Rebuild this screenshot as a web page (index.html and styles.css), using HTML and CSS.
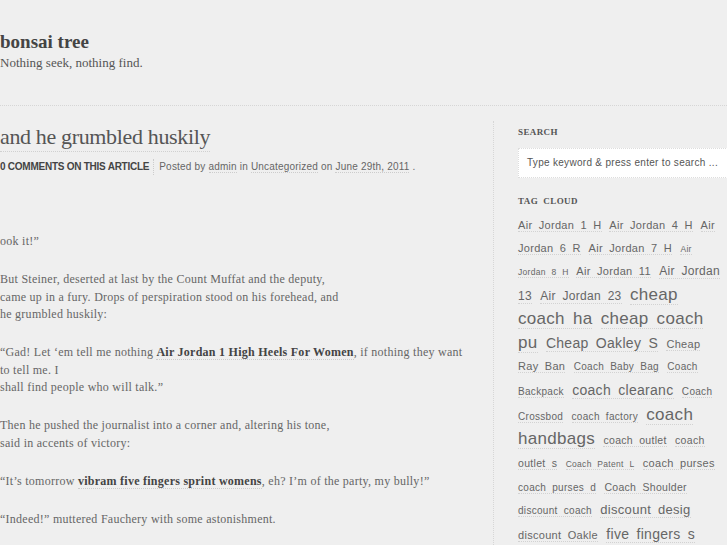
FILE: index.html
```html
<!DOCTYPE html>
<html>
<head>
<meta charset="utf-8">
<title>bonsai tree</title>
<link rel="stylesheet" href="styles.css">
</head>
<body>
<header class="site-header">
  <h1 class="site-title">bonsai tree</h1>
  <p class="site-desc">Nothing seek, nothing find.</p>
</header>
<div class="main">
  <article class="post">
    <h2 class="post-title"><a href="#">and he grumbled huskily</a></h2>
    <div class="post-meta">
      <span class="comments">0 COMMENTS ON THIS ARTICLE</span><span class="meta-info">Posted by <a href="#">admin</a> in <a href="#">Uncategorized</a> on <a href="#">June 29th, 2011</a> .</span>
    </div>
    <div class="entry">
      <p>ook it!”</p>
      <p>But Steiner, deserted at last by the Count Muffat and the deputy,<br>came up in a fury. Drops of perspiration stood on his forehead, and<br>he grumbled huskily:</p>
      <p>“Gad! Let ‘em tell me nothing <a href="#">Air Jordan 1 High Heels For Women</a>, if nothing they want to tell me. I<br>shall find people who will talk.”</p>
      <p>Then he pushed the journalist into a corner and, altering his tone,<br>said in accents of victory:</p>
      <p>“It’s tomorrow <a href="#">vibram five fingers sprint womens</a>, eh? I’m of the party, my bully!”</p>
      <p>“Indeed!” muttered Fauchery with some astonishment.</p>
    </div>
  </article>
  <aside class="sidebar">
    <h3 class="widget-title">SEARCH</h3>
    <div class="search-box">Type keyword &amp; press enter to search ...</div>
    <h3 class="widget-title">TAG&nbsp; CLOUD</h3>
    <div class="tagcloud">
      <a href="#" style="font-size:11px">Air Jordan 1 H</a>
      <a href="#" style="font-size:11px">Air Jordan 4 H</a>
      <a href="#" style="font-size:11px">Air Jordan 6 R</a>
      <a href="#" style="font-size:11px">Air Jordan 7 H</a>
      <a href="#" style="font-size:8.5px">Air Jordan 8 H</a>
      <a href="#" style="font-size:11px">Air Jordan 11</a>
      <a href="#" style="font-size:12px">Air Jordan 13</a>
      <a href="#" style="font-size:12px">Air Jordan 23</a>
      <a href="#" style="font-size:17px">cheap coach ha</a>
      <a href="#" style="font-size:17px">cheap coach pu</a>
      <a href="#" style="font-size:14px">Cheap Oakley S</a>
      <a href="#" style="font-size:11px">Cheap Ray Ban</a>
      <a href="#" style="font-size:10px">Coach Baby Bag</a>
      <a href="#" style="font-size:10px">Coach Backpack</a>
      <a href="#" style="font-size:14px">coach clearanc</a>
      <a href="#" style="font-size:10px">Coach Crossbod</a>
      <a href="#" style="font-size:10px">coach factory</a>
      <a href="#" style="font-size:17px">coach handbags</a>
      <a href="#" style="font-size:10.5px">coach outlet</a>
      <a href="#" style="font-size:10.5px">coach outlet s</a>
      <a href="#" style="font-size:8.5px">Coach Patent L</a>
      <a href="#" style="font-size:11px">coach purses</a>
      <a href="#" style="font-size:10px">coach purses d</a>
      <a href="#" style="font-size:10.5px">Coach Shoulder</a>
      <a href="#" style="font-size:10px">discount coach</a>
      <a href="#" style="font-size:13px">discount desig</a>
      <a href="#" style="font-size:11px">discount Oakle</a>
      <a href="#" style="font-size:14px">five fingers s</a>
    </div>
  </aside>
</div>
</body>
</html>
```
FILE: styles.css
```css
html, body {
  margin: 0;
  padding: 0;
  background: #efefef;
}
body {
  font-family: "Liberation Serif", "Times New Roman", serif;
  color: #666;
  overflow: hidden;
  height: 545px;
}
a {
  text-decoration: none;
}
.site-header {
  padding-top: 30px;
  padding-bottom: 32px;
  border-bottom: 1px dotted #d6d6d6;
}
.site-title {
  margin: 0;
  font-size: 19px;
  line-height: 23px;
  font-weight: bold;
  color: #444;
}
.site-desc {
  margin: 0;
  font-size: 13px;
  line-height: 20px;
  color: #555;
}
.main {
  display: flex;
  align-items: flex-start;
}
.post {
  width: 466px;
  flex: none;
  padding-top: 18px;
}
.post-title {
  margin: 0;
  font-size: 22px;
  line-height: 26px;
  letter-spacing: -0.35px;
  font-weight: normal;
}
.post-title a {
  color: #555;
  padding-bottom: 2px;
  border-bottom: 1px dotted #d0d0d0;
}
.post-meta {
  margin-top: 9px;
  font-family: "Liberation Sans", Arial, sans-serif;
  font-size: 10px;
  line-height: 16px;
  display: flex;
  align-items: center;
}
.comments {
  font-weight: bold;
  font-size: 10px;
  letter-spacing: -0.25px;
  color: #444;
  padding-right: 4px;
  border-right: 1px dotted #ccc;
  margin-right: 5px;
}
.meta-info {
  color: #666;
  letter-spacing: 0.2px;
}
.meta-info a {
  color: #666;
  border-bottom: 1px dotted #ccc;
}
.entry {
  padding-top: 58px;
  font-size: 12px;
  line-height: 17.5px;
  letter-spacing: 0.26px;
}
.entry p {
  margin: 0 0 20.5px;
}
.entry a {
  font-weight: bold;
  color: #444;
  border-bottom: 1px dotted #ccc;
}
.sidebar {
  margin-left: 27px;
  margin-top: 15px;
  padding-left: 24px;
  padding-top: 4px;
  border-left: 1px dotted #d6d6d6;
  width: 220px;
  height: 500px;
  flex: none;
}
.widget-title {
  margin: 0;
  font-size: 9px;
  line-height: 14px;
  font-weight: bold;
  letter-spacing: 0.4px;
  color: #555;
}
.search-box {
  margin-top: 9px;
  margin-bottom: 16px;
  height: 28px;
  width: 200px;
  box-sizing: content-box;
  padding: 0 8px;
  background: #fff;
  border: 1px dotted #ddd;
  font-family: "Liberation Sans", Arial, sans-serif;
  font-size: 10px;
  line-height: 28px;
  letter-spacing: 0.3px;
  color: #555;
  white-space: nowrap;
}
.tagcloud {
  margin-top: 6px;
  width: 204px;
  font-family: "Liberation Sans", Arial, sans-serif;
  font-size: 11px;
  line-height: 22.7px;
  word-spacing: 3px;
  letter-spacing: 0.3px;
}
.tagcloud a {
  color: #666;
  margin-right: 2px;
  border-bottom: 1px dotted #d2d2d2;
}
```
